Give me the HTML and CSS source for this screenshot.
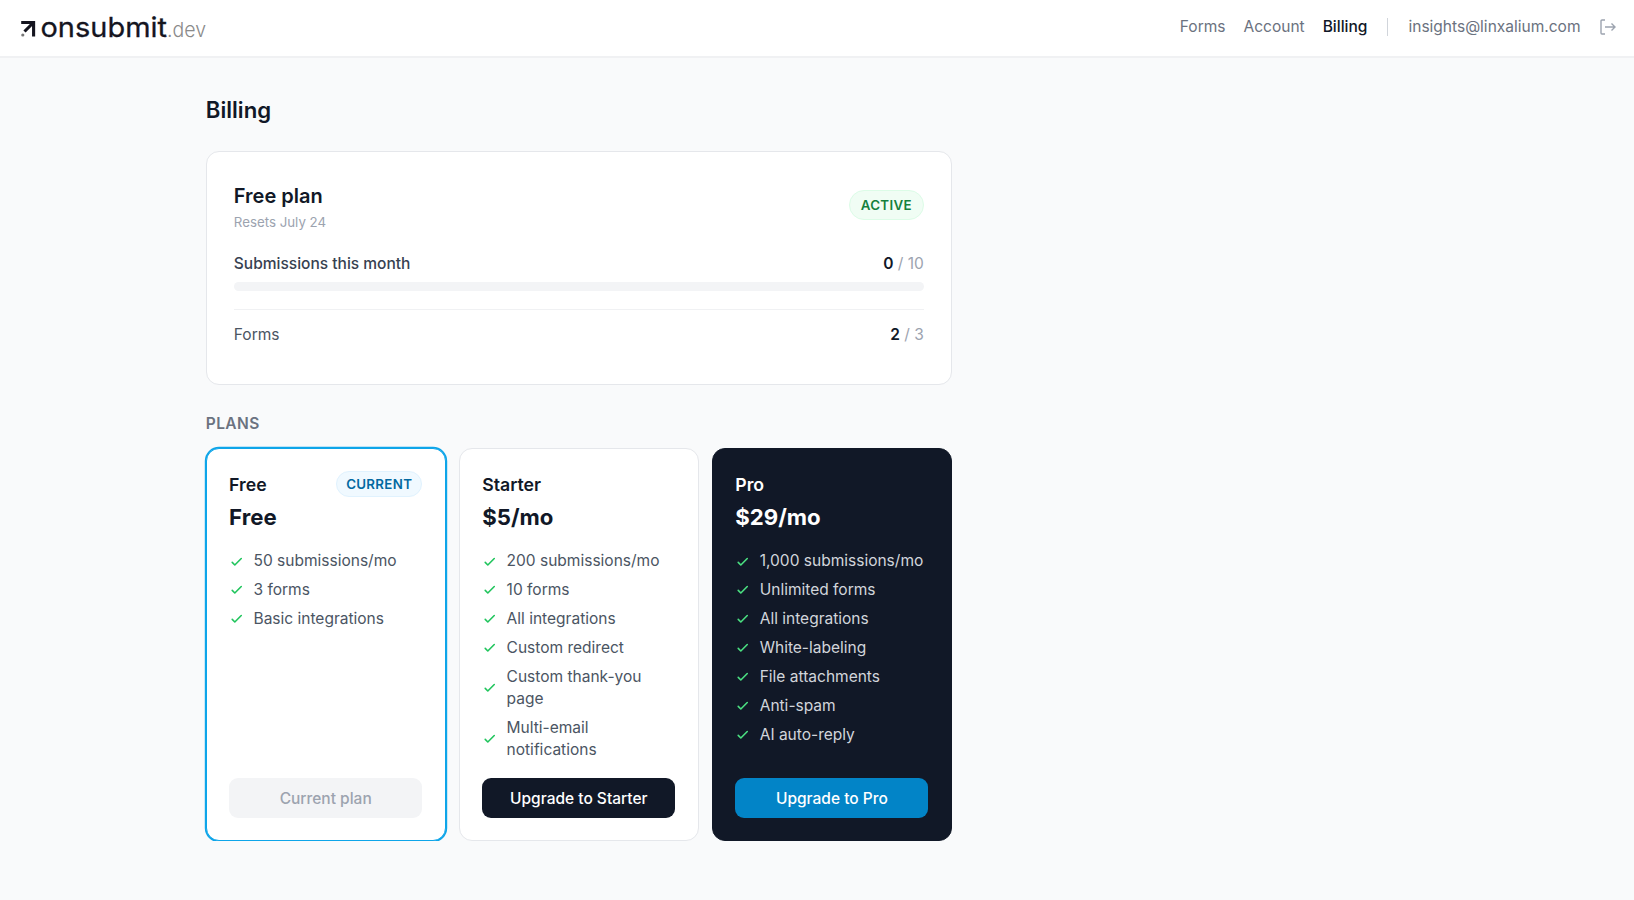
FILE: index.html
```
<!DOCTYPE html>
<html lang="en">

<head>
    <meta charset="UTF-8">
    <meta name="viewport" content="width=device-width, initial-scale=1.0">
    <title>Billing - onsubmit.dev</title>
    <link rel="stylesheet" href="styles.css">
</head>

<body>
    <svg class="sprite" aria-hidden="true">
        <symbol id="check" viewBox="0 0 24 24">
            <path d="M5 13l4 4L19 7" />
        </symbol>
    </svg>

    <header class="topbar">
        <a class="logo" href="#">
            <svg width="190" height="34" viewBox="0 0 190 34">
                <path class="logo-arrow" d="M1.2 12.5H13.6V26.5M13 13L4.5 21.5" />
                <circle class="logo-dot" cx="2.8" cy="25" r="1.6" />
                <text class="logo-name" x="20.5" y="26.5" textLength="126.5" lengthAdjust="spacingAndGlyphs">onsubmit</text>
                <text class="logo-tld" x="147" y="26.5" textLength="39" lengthAdjust="spacingAndGlyphs">.dev</text>
            </svg>
        </a>
        <nav class="nav">
            <a href="#">Forms</a>
            <a href="#">Account</a>
            <a class="active" href="#">Billing</a>
            <span class="separator"></span>
            <span class="email">insights@linxalium.com</span>
            <a class="logout" href="#" aria-label="Log out">
                <svg viewBox="0 0 18 18">
                    <path d="M6 2H3a1 1 0 0 0-1 1v12a1 1 0 0 0 1 1H6M6 9H16M12.5 5.5L16 9l-3.5 3.5" />
                </svg>
            </a>
        </nav>
    </header>

    <main class="content">
        <h1>Billing</h1>

        <section class="usage">
            <div class="usage-head">
                <div>
                    <h2>Free plan</h2>
                    <p class="resets">Resets July 24</p>
                </div>
                <span class="badge badge-active">ACTIVE</span>
            </div>
            <div class="row">
                <span class="label">Submissions this month</span>
                <span class="count"><b>0</b> / 10</span>
            </div>
            <div class="bar"></div>
            <div class="row row-forms">
                <span>Forms</span>
                <span class="count"><b>2</b> / 3</span>
            </div>
        </section>

        <h3 class="plans-title">PLANS</h3>
        <section class="plans">
            <div class="plan current">
                <div class="plan-head">
                    <h4>Free</h4>
                    <span class="badge badge-current">CURRENT</span>
                </div>
                <p class="price">Free</p>
                <ul>
                    <li><svg><use href="#check" /></svg><span>50 submissions/mo</span></li>
                    <li><svg><use href="#check" /></svg><span>3 forms</span></li>
                    <li><svg><use href="#check" /></svg><span>Basic integrations</span></li>
                </ul>
                <button class="btn btn-disabled" disabled>Current plan</button>
            </div>

            <div class="plan">
                <div class="plan-head">
                    <h4>Starter</h4>
                </div>
                <p class="price">$5/mo</p>
                <ul>
                    <li><svg><use href="#check" /></svg><span>200 submissions/mo</span></li>
                    <li><svg><use href="#check" /></svg><span>10 forms</span></li>
                    <li><svg><use href="#check" /></svg><span>All integrations</span></li>
                    <li><svg><use href="#check" /></svg><span>Custom redirect</span></li>
                    <li><svg><use href="#check" /></svg><span>Custom thank-you page</span></li>
                    <li><svg><use href="#check" /></svg><span>Multi-email notifications</span></li>
                </ul>
                <button class="btn">Upgrade to Starter</button>
            </div>

            <div class="plan pro">
                <div class="plan-head">
                    <h4>Pro</h4>
                </div>
                <p class="price">$29/mo</p>
                <ul>
                    <li><svg><use href="#check" /></svg><span>1,000 submissions/mo</span></li>
                    <li><svg><use href="#check" /></svg><span>Unlimited forms</span></li>
                    <li><svg><use href="#check" /></svg><span>All integrations</span></li>
                    <li><svg><use href="#check" /></svg><span>White-labeling</span></li>
                    <li><svg><use href="#check" /></svg><span>File attachments</span></li>
                    <li><svg><use href="#check" /></svg><span>Anti-spam</span></li>
                    <li><svg><use href="#check" /></svg><span>AI auto-reply</span></li>
                </ul>
                <button class="btn btn-blue">Upgrade to Pro</button>
            </div>
        </section>
    </main>
</body>

</html>
```
FILE: styles.css
```
* {
    box-sizing: border-box;
    margin: 0;
    padding: 0;
}

body {
    background-color: #f9fafb;
    color: #111827;
    font-family: 'Inter', sans-serif;
    font-size: 15.53px;
    line-height: 22.2px;
}

a {
    color: inherit;
    text-decoration: none;
}

.sprite {
    display: none;
}

/* top bar */
.topbar {
    display: flex;
    justify-content: space-between;
    align-items: center;
    height: 58px;
    padding: 0 17.5px 2px 20px;
    background-color: #fff;
    border-bottom: 2px solid #f0f1f3;
}

.logo svg {
    display: block;
}

.logo-arrow {
    fill: none;
    stroke: #15151f;
    stroke-width: 3.1;
}

.logo-dot {
    fill: #777;
}

.logo-name {
    font-size: 27.5px;
    fill: #15151f;
    stroke: #15151f;
    stroke-width: 0.3;
}

.logo-tld {
    font-size: 20.5px;
    font-weight: 300;
    fill: #8a8a8a;
}

.nav {
    display: flex;
    align-items: center;
    gap: 18px;
    color: #6b7280;
}

.nav .active {
    color: #111827;
    font-weight: 500;
}

.separator {
    width: 1px;
    height: 18px;
    margin: 0 2px;
    background-color: #d1d5db;
}

.logout svg {
    display: block;
    width: 18px;
    height: 18px;
    fill: none;
    stroke: #9ca3af;
    stroke-width: 1.4;
}

/* page */
.content {
    width: 746px;
    margin-left: 205.8px;
    padding-top: 36px;
}

h1 {
    margin-bottom: 25px;
    font-size: 22.2px;
    font-weight: 600;
    line-height: 32px;
}

.usage {
    height: 234px;
    padding: 28px 27px 0;
    background-color: #fff;
    border: 1px solid #e5e7eb;
    border-radius: 13px;
}

.usage-head {
    display: flex;
    justify-content: space-between;
    align-items: center;
    margin-bottom: 22px;
}

h2 {
    font-size: 20px;
    font-weight: 600;
    line-height: 32px;
}

.resets {
    margin-top: 1px;
    color: #9ca3af;
    font-size: 13.3px;
    line-height: 18px;
}

.badge {
    border: 1px solid;
    border-radius: 20px;
    font-size: 13.3px;
    font-weight: 600;
    letter-spacing: 0.33px;
}

.badge-active {
    margin-bottom: 2px;
    padding: 5px 11px;
    background-color: #f0fdf4;
    border-color: #dcfce7;
    color: #15803d;
    line-height: 18px;
}

.row {
    display: flex;
    justify-content: space-between;
    color: #374151;
}

.label {
    font-weight: 500;
}

.count {
    color: #9ca3af;
}

.count b {
    color: #111827;
    font-weight: 600;
}

.bar {
    height: 9px;
    margin: 6.5px 0 18px;
    background-color: #f3f4f6;
    border-radius: 5px;
}

.row-forms {
    padding-top: 14px;
    border-top: 1px solid #f0f1f3;
    color: #4b5563;
}

.plans-title {
    margin: 28px 0 12.8px;
    color: #6b7280;
    font-size: 15.5px;
    font-weight: 600;
    letter-spacing: 0.39px;
}

.plans {
    display: grid;
    grid-template-columns: repeat(3, 1fr);
    gap: 13.3px;
}

.plan {
    display: flex;
    flex-direction: column;
    height: 393px;
    padding: 22px 22.3px;
    background-color: #fff;
    border: 1px solid #e5e7eb;
    border-radius: 13px;
}

.current {
    border-color: #0ea5e9;
    box-shadow: 0 0 0 1.2px #0ea5e9;
}

.plan-head {
    display: flex;
    justify-content: space-between;
    align-items: flex-start;
    height: 30px;
}

h4 {
    font-size: 17.7px;
    font-weight: 600;
    line-height: 27px;
}

.badge-current {
    padding: 3px 9px;
    background-color: #f0f9ff;
    border-color: #e0f2fe;
    color: #0369a1;
    line-height: 18px;
}

.price {
    margin-bottom: 18.2px;
    font-size: 22.2px;
    font-weight: 700;
    line-height: 31px;
}

.plan ul {
    display: flex;
    flex-direction: column;
    gap: 6.7px;
    color: #4b5563;
    list-style: none;
}

.plan li {
    display: flex;
    align-items: center;
    gap: 8.9px;
}

.plan li svg {
    flex: none;
    width: 15.5px;
    height: 15.5px;
    fill: none;
    stroke: #22c55e;
    stroke-width: 2.5;
    stroke-linecap: round;
    stroke-linejoin: round;
}

.btn {
    height: 40px;
    margin-top: auto;
    background-color: #111827;
    border: none;
    border-radius: 9px;
    color: #fff;
    font-family: inherit;
    font-size: 15.5px;
    font-weight: 500;
}

.btn-disabled {
    background-color: #f3f4f6;
    color: #9ca3af;
}

.btn-blue {
    background-color: #0284c7;
}

/* dark card */
.pro {
    background-color: #111827;
    border-color: #111827;
    color: #fff;
}

.pro ul {
    color: #d1d5db;
}

.pro li svg {
    stroke: #4ade80;
}
```
